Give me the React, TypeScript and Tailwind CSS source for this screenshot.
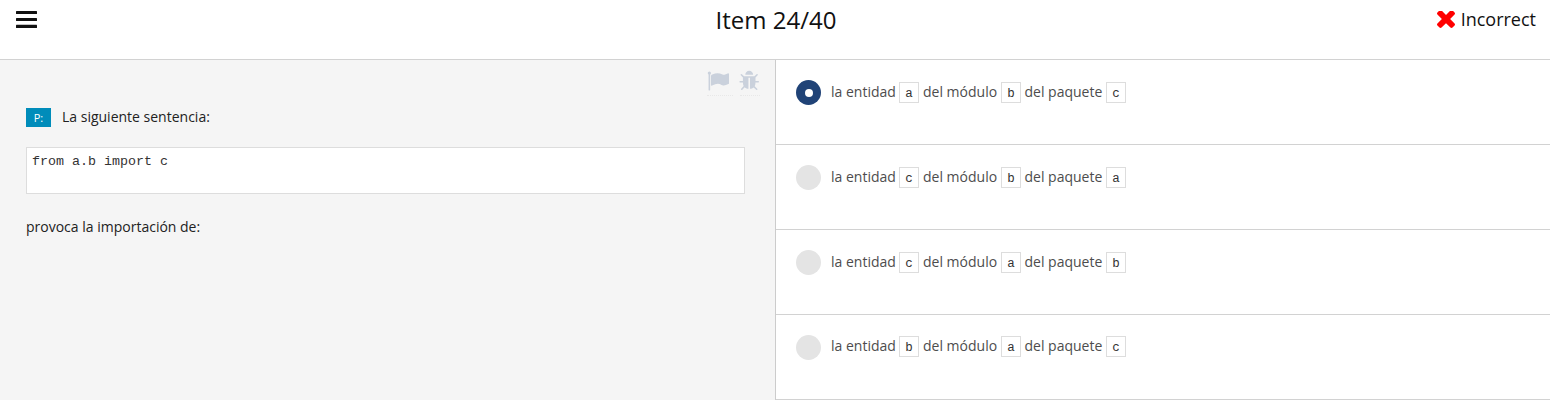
import React, { Fragment } from "react";

type IconProps = { d: string; className?: string; viewBox?: string };

function Icon({ d, className, viewBox = "0 0 1792 1792" }: IconProps) {
  return (
    <svg viewBox={viewBox} fill="currentColor" className={className} aria-hidden="true">
      <path d={d} />
    </svg>
  );
}

const FLAG =
  "M320 256q0 72-64 110v1266q0 13-9.5 22.5t-22.5 9.5h-64q-13 0-22.5-9.5t-9.5-22.5v-1266q-64-38-64-110 0-53 37.5-90.5t90.5-37.5 90.5 37.5 37.5 90.5zm1472 64v763q0 25-12.5 38.5t-39.5 27.5q-215 116-369 116-61 0-123.5-22t-108.5-48-115.5-48-142.5-22q-192 0-464 146-17 9-33 9-26 0-45-19t-19-45v-742q0-32 31-55 21-14 79-43 236-120 421-120 107 0 200 29t219 88q38 19 88 19 54 0 117.5-21t110-47 88-47 54.5-21q26 0 45 19t19 45z";
const BUG =
  "M1632 960q0 26-19 45t-45 19h-224q0 171-67 290l208 209q19 19 19 45t-19 45q-18 19-45 19t-45-19l-198-197q-5 5-15 13t-42 28.5-65 36.5-82 29-97 13v-896h-128v896q-51 0-101.5-13.5t-87-33-66-39-43.5-32.5l-15-14-183 207q-20 21-48 21-24 0-43-16-19-18-20.5-44.5t15.5-46.5l202-227q-58-114-58-274h-224q-26 0-45-19t-19-45 19-45 45-19h224v-294l-173-173q-19-19-19-45t19-45 45-19 45 19l173 173h844l173-173q19-19 45-19t45 19 19 45-19 45l-173 173v294h224q26 0 45 19t19 45zm-480-576h-640q0-133 93.5-226.5t226.5-93.5 226.5 93.5 93.5 226.5z";
const TIMES =
  "M1490 1322q0 40-28 68l-136 136q-28 28-68 28t-68-28l-294-294-294 294q-28 28-68 28t-68-28l-136-136q-28-28-28-68t28-68l294-294-294-294q-28-28-28-68t28-68l136-136q28-28 68-28t68 28l294 294 294-294q28-28 68-28t68 28l136 136q28 28 28 68t-28 68l-294 294 294 294q28 28 28 68z";

const OPTIONS = [
  ["a", "b", "c"],
  ["c", "b", "a"],
  ["c", "a", "b"],
  ["b", "a", "c"],
];
const LABELS = ["la entidad", "del módulo", "del paquete"];

function Option({ codes, selected, last }: { codes: string[]; selected: boolean; last: boolean }) {
  return (
    <div className="flex h-[85px] items-start border-b border-[#d2d2d2] pl-5 pt-5">
      <span
        className={
          selected
            ? "flex size-[25px] shrink-0 items-center justify-center rounded-full bg-[#204377]"
            : "size-[25px] shrink-0 rounded-full bg-[#e4e4e4]"
        }
      >
        {selected && <span className="size-2 rounded-full bg-white" />}
      </span>
      <div
        className={
          last
            ? "-mt-px ml-[10px] flex h-6 items-center whitespace-nowrap"
            : "ml-[10px] flex h-6 items-center whitespace-nowrap"
        }
      >
        {codes.map((code, i) => (
          <Fragment key={LABELS[i]}>
            <span className={i === 0 ? "w-[68px]" : i === 1 ? "w-[82px] pl-1" : "w-[85px] pl-[3.5px]"}>
              {LABELS[i]}
            </span>
            <code className="mt-px flex h-[21px] w-5 shrink-0 items-center justify-center border border-[#dddddd] bg-white pt-[3px] font-['Liberation_Mono',monospace] text-[12.5px] leading-[14px] text-[#333333]">
              {code}
            </code>
          </Fragment>
        ))}
      </div>
    </div>
  );
}

export default function App() {
  return (
    <div className="flex h-[400px] w-[1550px] flex-col overflow-hidden bg-white font-['Open_Sans',sans-serif] text-sm text-[#222222]">
      <header className="grid h-[60px] shrink-0 grid-cols-3 items-start border-b border-[#d2d2d2] text-[#111111]">
        <svg viewBox="0 0 21 17" className="ml-4 mt-[11px] h-[17px] w-[21px]" fill="#111111">
          <rect width="21" height="3" rx="0.5" />
          <rect y="7" width="21" height="3" rx="0.5" />
          <rect y="13.7" width="21" height="3.3" rx="0.5" />
        </svg>
        <h1 className="mt-0.5 pl-0.5 text-center text-2xl leading-9">Item 24/40</h1>
        <div className="mt-1.5 flex items-center justify-end pr-[14px] text-lg leading-[27px]">
          <Icon d={TIMES} viewBox="302 430 1188 1188" className="mr-[6px] size-[18px] text-[#ff0000]" />
          Incorrect
        </div>
      </header>
      <main className="flex min-h-0 flex-1">
        <section className="flex w-[776px] shrink-0 flex-col border-r border-[#cccccc] bg-[#f5f5f5] pl-[26px] pr-[30px]">
          <div className="-mr-[15px] flex h-[47px] items-start justify-end gap-[7px] pt-[10px] text-[#cad1dc]">
            <span className="h-[26px] w-[26px] border-b border-dotted border-[#e8e8e8]">
              <Icon d={FLAG} className="size-[22px]" />
            </span>
            <span className="flex h-[26px] w-5 justify-center border-b border-dotted border-[#e8e8e8]">
              <Icon d={BUG} className="size-[22px] shrink-0" />
            </span>
          </div>
          <div className="flex h-5 items-center">
            <span className="mt-px flex h-[19px] w-[25px] items-center justify-center bg-[#008cba] text-[11px] leading-none text-white">
              P:
            </span>
            <span className="ml-[11px]">La siguiente sentencia:</span>
          </div>
          <pre className="mt-5 h-[47px] border border-[#dddddd] bg-white px-[5px] pt-[5px] font-['Liberation_Mono',monospace] text-[13.33px] leading-[18px] text-[#333333]">
            from a.b import c
          </pre>
          <p className="mt-[22px] leading-[22px]">provoca la importación de:</p>
        </section>
        <section className="min-w-0 flex-1 text-[#4d4d4d]">
          {OPTIONS.map((codes, i) => (
            <Option key={i} codes={codes} selected={i === 0} last={i === OPTIONS.length - 1} />
          ))}
        </section>
      </main>
    </div>
  );
}
